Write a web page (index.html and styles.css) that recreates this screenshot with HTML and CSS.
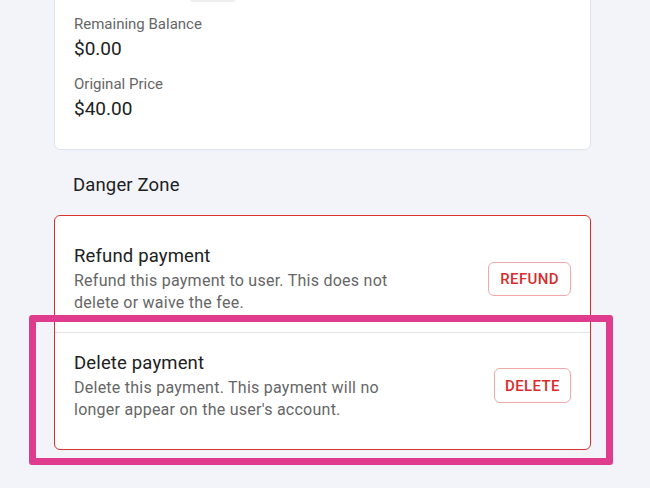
FILE: index.html
```html
<!DOCTYPE html>
<html lang="en">
<head>
    <meta charset="UTF-8">
    <meta name="viewport" content="width=device-width, initial-scale=1.0">
    <title>Payment details</title>
    <link rel="stylesheet" href="styles.css">
</head>
<body>
    <div class="page">
        <!-- payment summary -->
        <div class="card summary">
            <div class="status-row">
                <span class="tag"></span>
            </div>
            <div class="field">
                <div class="label">Remaining Balance</div>
                <div class="value">$0.00</div>
            </div>
            <div class="field">
                <div class="label">Original Price</div>
                <div class="value">$40.00</div>
            </div>
        </div>

        <!-- danger zone -->
        <h3 class="section-title">Danger Zone</h3>
        <div class="card danger">
            <div class="action">
                <div class="text">
                    <div class="title">Refund payment</div>
                    <div class="desc">Refund this payment to user. This does not delete or waive the fee.</div>
                </div>
                <button class="btn">Refund</button>
            </div>
            <div class="action">
                <div class="text">
                    <div class="title">Delete payment</div>
                    <div class="desc">Delete this payment. This payment will no longer appear on the user's account.</div>
                </div>
                <button class="btn btn-delete">Delete</button>
            </div>
            <div class="highlight"></div>
        </div>
    </div>
</body>
</html>
```

FILE: styles.css
```css
html, body { height: 100%; }
body {
    margin: 0;
    background: #f3f4f9;
    font-family: Roboto, "Liberation Sans", sans-serif;
    color: #212121;
    overflow: hidden;
}
.page {
    width: 537px;
    margin: -30px 0 0 54px;
}
.card {
    background: #fff;
    border: 1px solid #e2e3e8;
    border-radius: 6px;
}
.summary { padding: 7px 19px 26px; }
.status-row { display: flex; padding-left: 116px; margin-bottom: 11px; }
.tag {
    display: block;
    width: 46px;
    height: 24px;
    background: #eee;
    border-radius: 3px;
}
.field + .field { margin-top: 10px; }
.label { font-size: 15px; line-height: 22px; color: #666; }
.value { font-size: 19px; line-height: 28px; }

.section-title {
    margin: 22px 0 17px 19px;
    font-size: 18.5px;
    line-height: 26px;
    font-weight: 400;
    letter-spacing: 0.15px;
}
.danger {
    position: relative;
    border-color: #d93030;
    padding: 10px 19px;
}
.action {
    display: flex;
    align-items: center;
    justify-content: space-between;
    padding: 17px 0 18px;
}
.action + .action { border-top: 1px solid #e3e3e3; margin: 0 -19px; padding: 17px 19px 18px; }
.text { width: 330px; }
.title { font-size: 18.5px; line-height: 26px; letter-spacing: 0.15px; margin-bottom: 1px; }
.desc { font-size: 16px; line-height: 22px; letter-spacing: 0.25px; color: #666; }
.btn {
    height: 34px;
    padding: 0 11px;
    background: #fff;
    border: 1px solid #f0a8a8;
    border-radius: 6px;
    color: #d62d2d;
    font-family: inherit;
    font-size: 15px;
    font-weight: 500;
    letter-spacing: 0.4px;
    text-transform: uppercase;
    cursor: pointer;
}
.btn-delete { height: 35px; padding: 0 10px; }

/* annotation box over the delete row */
.highlight {
    position: absolute;
    left: -26px;
    right: -23px;
    top: 99px;
    bottom: -16px;
    border: 7px solid #e03c8e;
    border-radius: 3px;
    pointer-events: none;
}
```
